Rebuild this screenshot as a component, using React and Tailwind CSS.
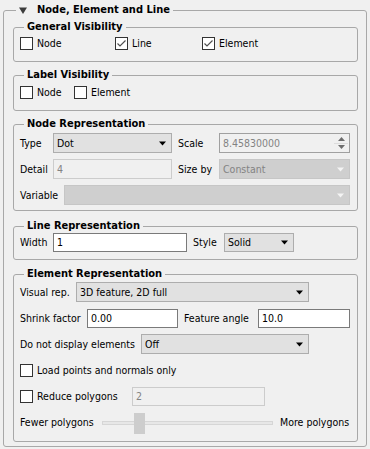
import React from 'react';

const font = { fontFamily: '"DejaVu Sans Condensed", "Liberation Sans", Arial, sans-serif' };

const GroupBox = ({ title, className, titleClass, children }) => (
    <div className={`relative border border-[#a8a8a8] rounded-[3px] ${className}`}>
        <div className={`absolute -top-[8px] bg-[#f0f0f0] px-[3px] font-bold text-[11px] leading-[14px] whitespace-nowrap ${titleClass || 'left-[10px]'}`}>
            {title}
        </div>
        {children}
    </div>
);

const Check = ({ checked }) => (
    <span className="w-[13px] h-[13px] bg-white border border-[#333333] flex items-center justify-center shrink-0">
        {checked && (
            <svg width="11" height="11" viewBox="0 0 11 11">
                <path d="M1.5 5.5 L4 8 L9.5 2.5" fill="none" stroke="#505050" strokeWidth="1.2" />
            </svg>
        )}
    </span>
);

const CheckBox = ({ checked, label, className }) => (
    <div className={`flex items-center gap-[4px] whitespace-nowrap ${className || ''}`}>
        <Check checked={checked} />
        <span>{label}</span>
    </div>
);

const Arrow = ({ disabled }) => (
    <svg width="9" height="5" viewBox="0 0 9 5" className="shrink-0">
        <path d="M1 0.5 L8 0.5 L4.5 4.5 Z" fill={disabled ? '#f4f4f4' : '#000000'} />
    </svg>
);

const Combo = ({ value, disabled, className }) => (
    <div
        className={`flex items-center justify-between pl-[3px] pr-[4px] border ${
            disabled
                ? 'bg-[#cfcfcf] border-[#c6c6c6] text-[#838383]'
                : 'bg-[#e1e1e1] border-[#adadad] text-black'
        } ${className}`}
    >
        <span className="whitespace-nowrap">{value}</span>
        <Arrow disabled={disabled} />
    </div>
);

const LineEdit = ({ value, disabled, className }) => (
    <div
        className={`flex items-center pl-[3px] border ${
            disabled ? 'bg-[#f0f0f0] border-[#cccccc] text-[#838383]' : 'bg-white border-[#7a7a7a] text-black'
        } ${className}`}
    >
        {value}
    </div>
);

const SpinBox = ({ value, className }) => (
    <div className={`flex items-center border border-[#a0a0a0] bg-[#f0f0f0] text-[#838383] ${className}`}>
        <span className="flex-1 pl-[3px]">{value}</span>
        <div className="w-[15px] h-full flex flex-col py-[1px] pr-[1px]">
            <div className="flex-1 flex items-center justify-center border-b border-[#dcdcdc]">
                <svg width="7" height="4" viewBox="0 0 7 4">
                    <path d="M0 4 L7 4 L3.5 0 Z" fill="#6d6d6d" />
                </svg>
            </div>
            <div className="flex-1 flex items-center justify-center">
                <svg width="7" height="4" viewBox="0 0 7 4">
                    <path d="M0 0 L7 0 L3.5 4 Z" fill="#6d6d6d" />
                </svg>
            </div>
        </div>
    </div>
);

const App = () => {
    return (
        <div className="w-[370px] h-[449px] bg-[#f0f0f0] pt-[10px] pl-[3px] text-[10.5px] leading-[13px] text-black" style={font}>
            <GroupBox
                className="w-[364px] pt-[16px] pb-[4px] pl-[9px]"
                titleClass="left-[12px]"
                title={
                    <span className="flex items-center gap-[10px]">
                        <svg width="8" height="7" viewBox="0 0 8 7">
                            <path d="M0 0.5 L8 0.5 L4 7 Z" fill="#3c3c3c" />
                        </svg>
                        <span>Node, Element and Line</span>
                    </span>
                }
            >
                {/* General Visibility */}
                <GroupBox title="General Visibility" className="w-[345px] pt-[9px] pb-[11px] pl-[6px]">
                    <div className="flex items-center h-[13px]">
                        <CheckBox label="Node" className="w-[95px]" />
                        <CheckBox checked label="Line" className="w-[87px]" />
                        <CheckBox checked label="Element" />
                    </div>
                </GroupBox>

                {/* Label Visibility */}
                <GroupBox title="Label Visibility" className="w-[345px] mt-[13px] pt-[10px] pb-[11px] pl-[6px]">
                    <div className="flex items-center h-[13px]">
                        <CheckBox label="Node" className="w-[54px]" />
                        <CheckBox label="Element" />
                    </div>
                </GroupBox>

                {/* Node Representation */}
                <GroupBox title="Node Representation" className="w-[345px] mt-[13px] pt-[8px] pb-[5px] pl-[6px] pr-[7px]">
                    <div className="grid grid-cols-[33px_119px_47px_1fr] gap-y-[6px] items-center">
                        <span>Type</span>
                        <Combo value="Dot" className="h-[20px]" />
                        <span className="pl-[6px]">Scale</span>
                        <SpinBox value="8.45830000" className="h-[20px]" />
                        <span>Detail</span>
                        <LineEdit value="4" disabled className="h-[20px]" />
                        <span className="pl-[6px] whitespace-nowrap">Size by</span>
                        <Combo value="Constant" disabled className="h-[20px]" />
                    </div>
                    <div className="flex items-center mt-[6px]">
                        <span className="w-[44px]">Variable</span>
                        <Combo value="" disabled className="flex-1 h-[20px]" />
                    </div>
                </GroupBox>

                {/* Line Representation */}
                <GroupBox title="Line Representation" className="w-[345px] mt-[15px] pt-[6px] pb-[7px] pl-[6px]">
                    <div className="flex items-center h-[19px]">
                        <span className="w-[33px]">Width</span>
                        <LineEdit value="1" className="w-[134px] h-[19px]" />
                        <span className="ml-[6px] w-[31px]">Style</span>
                        <Combo value="Solid" className="w-[70px] h-[19px]" />
                    </div>
                </GroupBox>

                {/* Element Representation */}
                <GroupBox title="Element Representation" className="w-[345px] mt-[14px] pt-[7px] pb-[8px] pl-[6px] pr-[7px]">
                    <div className="flex items-center">
                        <span className="w-[56px] whitespace-nowrap">Visual rep.</span>
                        <Combo value="3D feature, 2D full" className="w-[233px] h-[20px]" />
                    </div>
                    <div className="flex items-center mt-[7px]">
                        <span className="w-[67px] whitespace-nowrap">Shrink factor</span>
                        <LineEdit value="0.00" className="w-[91px] h-[19px]" />
                        <span className="ml-[6px] w-[74px] whitespace-nowrap">Feature angle</span>
                        <LineEdit value="10.0" className="flex-1 h-[19px]" />
                    </div>
                    <div className="flex items-center mt-[6px]">
                        <span className="w-[121px] whitespace-nowrap">Do not display elements</span>
                        <Combo value="Off" className="w-[168px] h-[20px]" />
                    </div>
                    <CheckBox label="Load points and normals only" className="mt-[10px] h-[13px]" />
                    <div className="flex items-center mt-[10px] h-[19px]">
                        <CheckBox label="Reduce polygons" className="w-[112px]" />
                        <LineEdit value="2" disabled className="w-[133px] h-[19px]" />
                    </div>
                    <div className="flex items-center mt-[6px] h-[21px]">
                        <span className="w-[82px] whitespace-nowrap">Fewer polygons</span>
                        <div className="relative w-[171px] h-[4px] shrink-0 bg-[#e7e7e7] border border-[#d6d6d6]">
                            <div className="absolute left-[31px] -top-[9px] w-[11px] h-[21px] bg-[#cdcdcd]" />
                        </div>
                        <span className="ml-[7px] whitespace-nowrap">More polygons</span>
                    </div>
                </GroupBox>
            </GroupBox>
        </div>
    );
};

export default App;
